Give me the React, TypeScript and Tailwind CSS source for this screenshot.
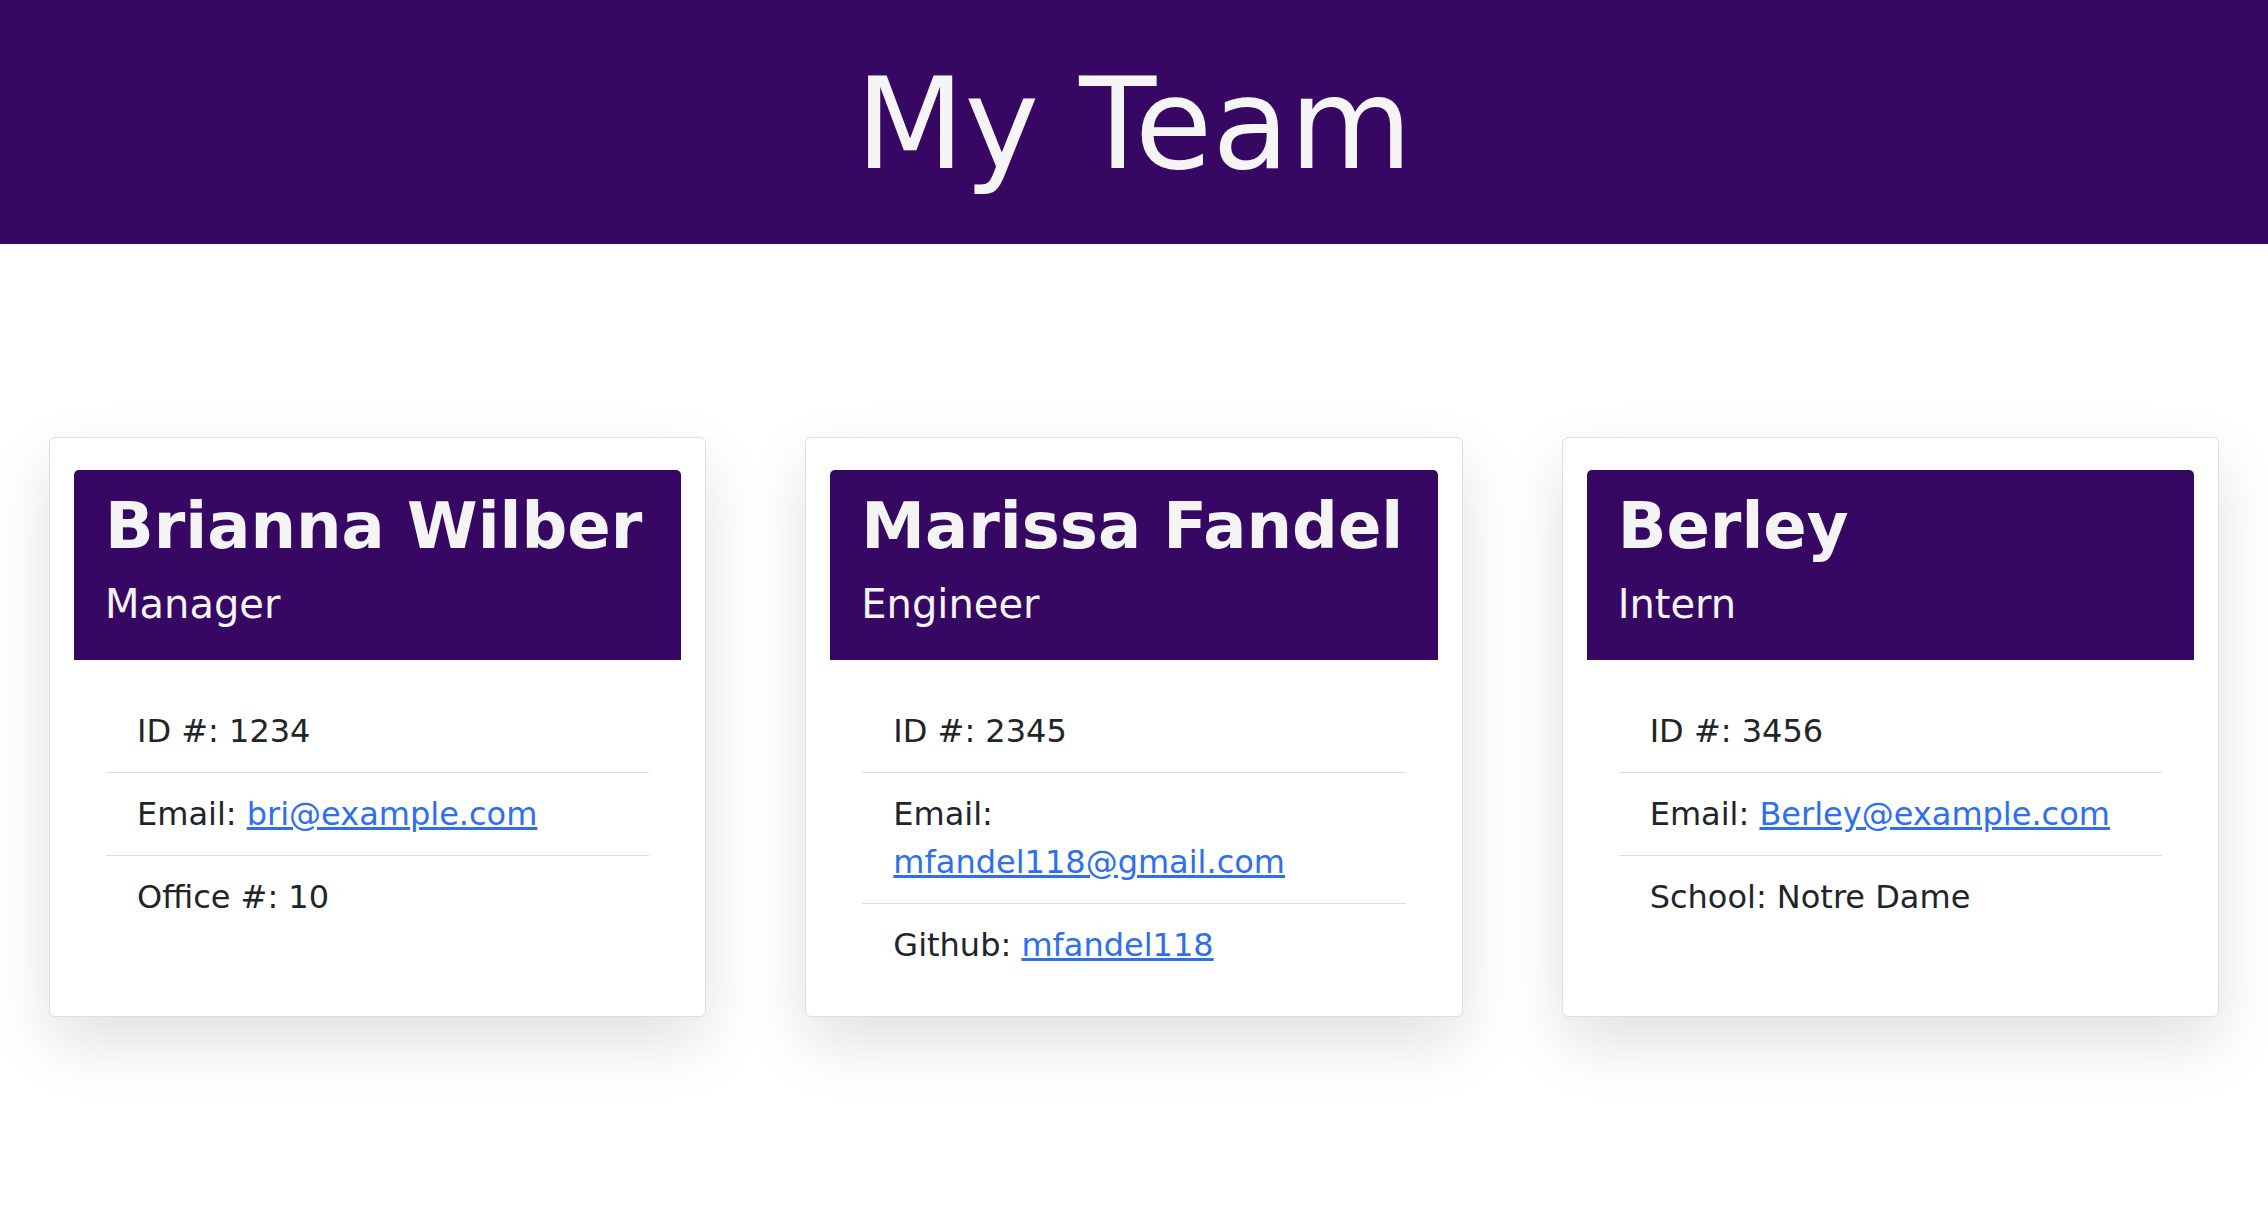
import React from 'react';

type Row = { label: string; value: string; href?: string };

const team: { name: string; role: string; rows: Row[] }[] = [
  {
    name: 'Brianna Wilber',
    role: 'Manager',
    rows: [
      { label: 'ID #:', value: '1234' },
      { label: 'Email:', value: 'bri@example.com', href: 'mailto:bri@example.com' },
      { label: 'Office #:', value: '10' },
    ],
  },
  {
    name: 'Marissa Fandel',
    role: 'Engineer',
    rows: [
      { label: 'ID #:', value: '2345' },
      { label: 'Email:', value: 'mfandel118@gmail.com', href: 'mailto:mfandel118@gmail.com' },
      { label: 'Github:', value: 'mfandel118', href: 'https://github.com/mfandel118' },
    ],
  },
  {
    name: 'Berley',
    role: 'Intern',
    rows: [
      { label: 'ID #:', value: '3456' },
      { label: 'Email:', value: 'Berley@example.com', href: 'mailto:Berley@example.com' },
      { label: 'School:', value: 'Notre Dame' },
    ],
  },
];

const App: React.FC = () => {
  return (
    <div className="min-h-screen bg-white font-['DejaVu_Sans',sans-serif]">
      <header className="h-[244px] pt-[6px] bg-[#370863] flex items-center justify-center">
        <h1 className="text-[126px] leading-none text-[#f5f5f5] font-normal">My Team</h1>
      </header>

      <main className="grid grid-cols-3 items-stretch gap-[99px] px-[49px] pt-[193px]">
        {team.map((member) => (
          <div
            key={member.name}
            className="bg-white border border-[#dedede] rounded-[6px] pt-[32px] px-[24px] pb-[30px] shadow-[0_26px_64px_rgba(0,0,0,0.12)]"
          >
            <div className="bg-[#370863] rounded-t-[5px] pt-[18px] pb-[32px] px-[31px] text-[#f4f4f4]">
              <h2 className="text-[64px] leading-[77px] font-bold whitespace-nowrap">{member.name}</h2>
              <h3 className="text-[40px] leading-[48px] mt-[15px] font-normal">{member.role}</h3>
            </div>
            <ul className="mx-[32px] mt-[30px] divide-y divide-[#dcdcdc] text-[32px] leading-[48px] text-[#212529]">
              {member.rows.map((row) => (
                <li key={row.label} className="py-[17px] px-[31px]">
                  {row.label}{' '}
                  {row.href ? (
                    <a href={row.href} className="text-[#2f6fee] underline">
                      {row.value}
                    </a>
                  ) : (
                    row.value
                  )}
                </li>
              ))}
            </ul>
          </div>
        ))}
      </main>
    </div>
  );
};

export default App;
